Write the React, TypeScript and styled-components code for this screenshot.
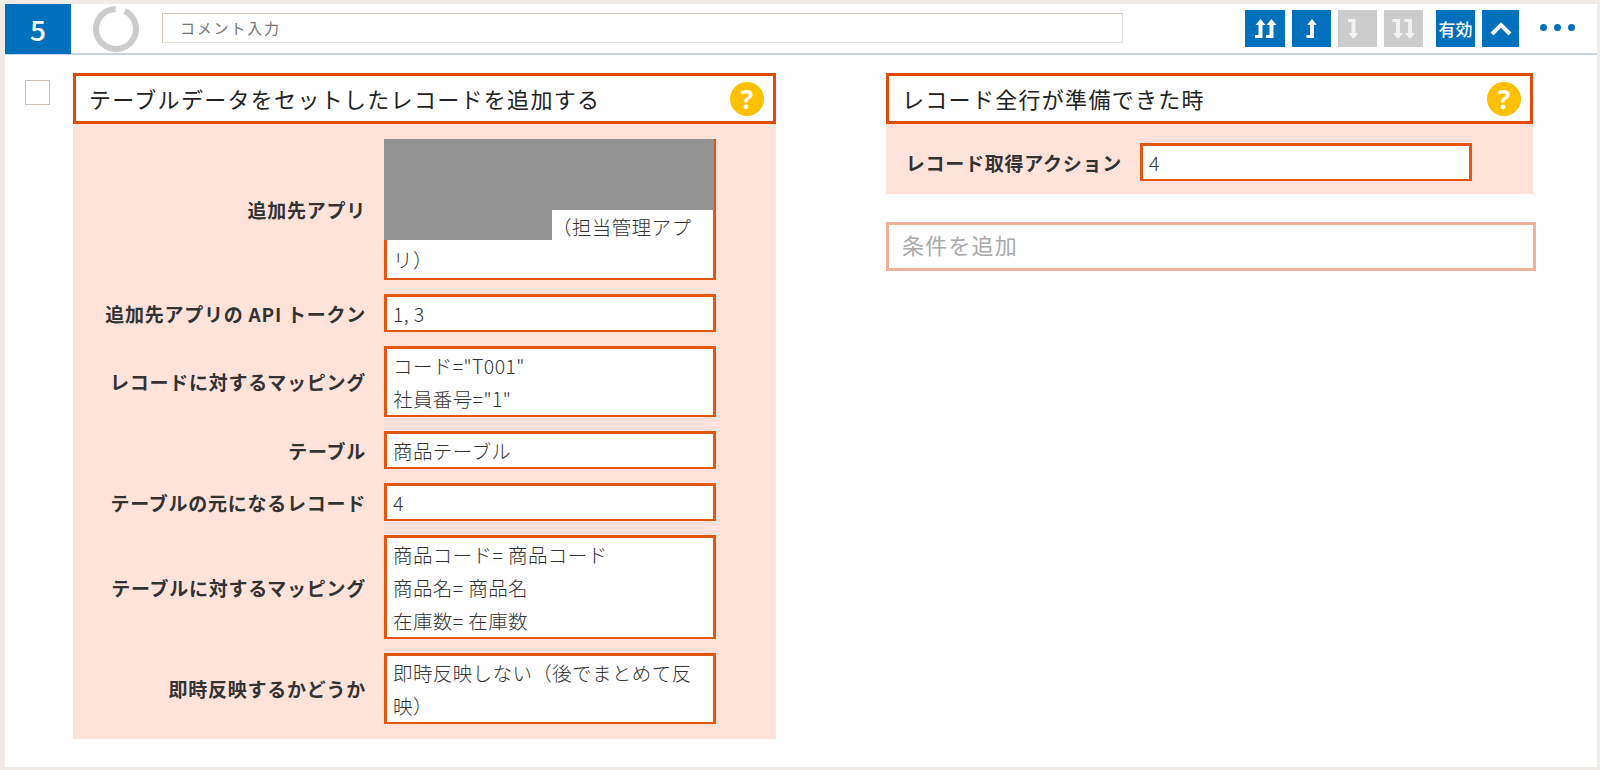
import React from "react"
import styled, { createGlobalStyle } from "styled-components"

const Global = createGlobalStyle`
  html, body {
    margin: 0;
    padding: 0;
    background: #f0ebe5;
  }
  * {
    box-sizing: border-box;
  }
`

const Page = styled.div`
  width: 1600px;
  height: 770px;
  padding: 4px 3px 3px 5px;
  font-family: "Noto Sans CJK JP", "Noto Sans", sans-serif;
  overflow: hidden;
`

const Sheet = styled.div`
  height: 100%;
  background: #fff;
`

const Header = styled.header`
  display: flex;
  align-items: flex-start;
  height: 51px;
  border-bottom: 2px solid #c5d3e3;
`

const StepNo = styled.div`
  width: 66px;
  height: 50px;
  background: #0070bc;
  color: #fff;
  font-size: 28px;
  font-weight: 500;
  display: flex;
  align-items: center;
  justify-content: center;
`

const Ring = styled.svg`
  margin: 2px 0 0 22px;
  width: 46px;
  height: 46px;
  flex: none;
`

const Comment = styled.div`
  margin: 9px 0 0 23px;
  width: 961px;
  height: 30px;
  border: 1px solid #e6dfd5;
  border-top-color: #cfc4b6;
  border-left-color: #cfc4b6;
  padding-left: 17px;
  font-size: 15px;
  line-height: 27px;
  letter-spacing: 1.8px;
  color: #777;
`

const Tools = styled.div`
  display: flex;
  margin: 6px 0 0 122px;
`

const ToolButton = styled.div<{ $off?: boolean; $w?: number; $after?: number }>`
  width: ${(p) => p.$w ?? 39}px;
  height: 37px;
  margin-right: ${(p) => p.$after ?? 7}px;
  background: ${(p) => (p.$off ? "#cccccc" : "#0070bc")};
  color: ${(p) => (p.$off ? "#f2f2f2" : "#fff")};
  font-size: 17px;
  font-weight: 500;
  letter-spacing: 0;
  display: flex;
  align-items: center;
  justify-content: center;
`

const Dots = styled.div`
  display: flex;
  gap: 7px;
  margin: 20px 0 0 21px;
`

const Dot = styled.span`
  width: 7px;
  height: 7px;
  border-radius: 50%;
  background: #0070bc;
`

const Body = styled.div`
  display: flex;
  align-items: flex-start;
  padding-top: 18px;
`

const Check = styled.div`
  margin: 7px 0 0 20px;
  width: 25px;
  height: 25px;
  border: 1px solid #cfc0b0;
  flex: none;
`

const LeftCol = styled.section`
  margin-left: 23px;
  width: 703px;
  flex: none;
`

const RightCol = styled.section`
  margin-left: 110px;
  width: 647px;
  flex: none;
`

const Title = styled.div`
  height: 51px;
  border: 3px solid #dd4a0a;
  display: flex;
  align-items: center;
  justify-content: space-between;
  padding: 0 9px 2px 13px;
  font-size: 22px;
  letter-spacing: 1.3px;
  color: #222;
`

const Help = styled.span`
  width: 34px;
  height: 34px;
  margin-top: 2px;
  border-radius: 50%;
  background: #ffc000;
  color: #fff;
  font-size: 26px;
  font-weight: 700;
  font-family: "Noto Sans", sans-serif;
  display: flex;
  align-items: center;
  justify-content: center;
  letter-spacing: 0;
`

const Panel = styled.div`
  background: #ffe3db;
  padding: 15px 60px 15px 0;
  display: flex;
  flex-direction: column;
  gap: 14px;
`

const Row = styled.div`
  display: grid;
  grid-template-columns: 293px 332px;
  column-gap: 18px;
  align-items: center;
`

const Label = styled.div`
  text-align: right;
  font-size: 19px;
  font-weight: 700;
  letter-spacing: 0.75px;
  white-space: nowrap;
  color: #333;
`

const Field = styled.div`
  border: solid #e2580f;
  border-width: 3px 3px 2px;
  background: #fff;
  padding: 0 6px;
  font-size: 19.5px;
  font-weight: 300;
  line-height: 33px;
  letter-spacing: 0.4px;
  color: #333;
`

const RedactedField = styled(Field)`
  min-height: 141px;
`

const RedactWide = styled.div`
  float: left;
  width: calc(100% + 16px);
  height: 71px;
  margin: -3px -7px 0 -9px;
  background: #939393;
`

const RedactShort = styled.div`
  float: left;
  clear: left;
  width: 168px;
  height: 30px;
  margin: 0 0 0 -9px;
  background: #939393;
`

const RecordPanel = styled(Panel)`
  padding: 19px 0 0 0;
  height: 70px;
`

const RecordRow = styled.div`
  display: grid;
  grid-template-columns: 236px 332px;
  column-gap: 18px;
  align-items: center;
`

const AddCondition = styled.div`
  margin-top: 28px;
  width: 650px;
  height: 49px;
  border: 3px solid #f0b09c;
  padding-left: 13px;
  font-size: 22px;
  line-height: 38px;
  letter-spacing: 1.2px;
  color: #aaa;
`

const Arrow = ({ x, up }: { x: number; up: boolean }) =>
  up ? (
    <path d={`M${x} 1 l5 6 h-3 v13 h-7.5 v-3 h3.5 v-10 h-3 z`} fill="currentColor" />
  ) : (
    <path d={`M${x} 21 l5 -6 h-3 v-14 h-7.5 v3 h3.5 v11 h-3 z`} fill="currentColor" />
  )

const ArrowIcon = ({ xs, up }: { xs: number[]; up: boolean }) => (
  <svg width="23" height="22" viewBox="0 0 23 22">
    {xs.map((x) => (
      <Arrow key={x} x={x} up={up} />
    ))}
  </svg>
)

export default function App() {
  return (
    <Page>
      <Global />
      <Sheet>
        <Header>
          <StepNo>5</StepNo>
          <Ring viewBox="0 0 46 46">
            <circle
              cx="23"
              cy="23"
              r="20"
              fill="none"
              stroke="#cccccc"
              strokeWidth="6"
              strokeDasharray="115.5 10.16"
              transform="rotate(-64 23 23)"
            />
          </Ring>
          <Comment>コメント入力</Comment>
          <Tools>
            <ToolButton $w={40}>
              <ArrowIcon xs={[6.5, 17.5]} up />
            </ToolButton>
            <ToolButton>
              <ArrowIcon xs={[12]} up />
            </ToolButton>
            <ToolButton $off>
              <ArrowIcon xs={[7.5]} up={false} />
            </ToolButton>
            <ToolButton $off $after={13}>
              <ArrowIcon xs={[6, 18]} up={false} />
            </ToolButton>
            <ToolButton>有効</ToolButton>
            <ToolButton $w={37} $after={0}>
              <svg width="24" height="16" viewBox="0 0 24 16">
                <path d="M3 13 L12 4 L21 13" fill="none" stroke="#fff" strokeWidth="4" />
              </svg>
            </ToolButton>
          </Tools>
          <Dots>
            <Dot />
            <Dot />
            <Dot />
          </Dots>
        </Header>
        <Body>
          <Check />
          <LeftCol>
            <Title>
              テーブルデータをセットしたレコードを追加する
              <Help>?</Help>
            </Title>
            <Panel>
              <Row>
                <Label>追加先アプリ</Label>
                <RedactedField>
                  <RedactWide />
                  <RedactShort />
                  （担当管理アプリ）
                </RedactedField>
              </Row>
              <Row>
                <Label>追加先アプリの API トークン</Label>
                <Field>1, 3</Field>
              </Row>
              <Row>
                <Label>レコードに対するマッピング</Label>
                <Field>
                  コード="T001"
                  <br />
                  社員番号="1"
                </Field>
              </Row>
              <Row>
                <Label>テーブル</Label>
                <Field>商品テーブル</Field>
              </Row>
              <Row>
                <Label>テーブルの元になるレコード</Label>
                <Field>4</Field>
              </Row>
              <Row>
                <Label>テーブルに対するマッピング</Label>
                <Field>
                  商品コード= 商品コード
                  <br />
                  商品名= 商品名
                  <br />
                  在庫数= 在庫数
                </Field>
              </Row>
              <Row>
                <Label>即時反映するかどうか</Label>
                <Field>即時反映しない（後でまとめて反映）</Field>
              </Row>
            </Panel>
          </LeftCol>
          <RightCol>
            <Title>
              レコード全行が準備できた時
              <Help>?</Help>
            </Title>
            <RecordPanel>
              <RecordRow>
                <Label>レコード取得アクション</Label>
                <Field>4</Field>
              </RecordRow>
            </RecordPanel>
            <AddCondition>条件を追加</AddCondition>
          </RightCol>
        </Body>
      </Sheet>
    </Page>
  )
}
